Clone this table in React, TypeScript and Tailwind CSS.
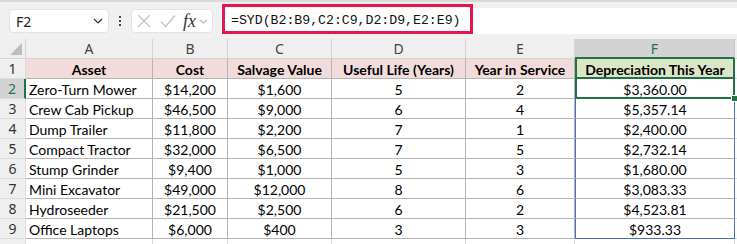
import React from "react";

const data: [string, string, string, string, string, string][] = [
  ["Zero-Turn Mower", "$14,200", "$1,600", "5", "2", "$3,360.00"],
  ["Crew Cab Pickup", "$46,500", "$9,000", "6", "4", "$5,357.14"],
  ["Dump Trailer", "$11,800", "$2,200", "7", "1", "$2,400.00"],
  ["Compact Tractor", "$32,000", "$6,500", "7", "5", "$2,732.14"],
  ["Stump Grinder", "$9,400", "$1,000", "5", "3", "$1,680.00"],
  ["Mini Excavator", "$49,000", "$12,000", "8", "6", "$3,083.33"],
  ["Hydroseeder", "$21,500", "$2,500", "6", "2", "$4,523.81"],
  ["Office Laptops", "$6,000", "$400", "3", "3", "$933.33"],
];

const headers = ["Asset", "Cost", "Salvage Value", "Useful Life (Years)", "Year in Service"];

const cellFont = { fontFamily: "Lato, 'Open Sans', sans-serif" };
const uiFont = { fontFamily: "'Noto Sans', 'Liberation Sans', sans-serif" };

function Chevron({ className }: { className?: string }) {
  return (
    <svg viewBox="0 0 10 6" className={className} fill="none" stroke="currentColor" strokeWidth="1.2">
      <path d="M1 1 L5 5 L9 1" />
    </svg>
  );
}

export default function App() {
  return (
    <div className="w-[737px] h-[244px] overflow-hidden bg-white relative">
      {/* Formula bar */}
      <div className="h-[39px] bg-[#f0f0f0] border-t-2 border-[#d9d9d9] flex items-start pt-[7px]">
        <div
          className="ml-[9px] w-[100px] h-[24px] bg-white rounded-[4px] border border-[#e3e3e3] flex items-center justify-between pl-[6px] pr-[5px] text-[14px] text-[#222]"
          style={uiFont}
        >
          <span>F2</span>
          <Chevron className="w-[10px] h-[6px] text-[#333]" />
        </div>
        <div className="w-[22px] h-[24px] flex flex-col items-center justify-center gap-[2px]">
          <span className="w-[2px] h-[2px] bg-[#444] block"></span>
          <span className="w-[2px] h-[2px] bg-[#444] block"></span>
          <span className="w-[2px] h-[2px] bg-[#444] block"></span>
        </div>
        <div className="w-[82px] h-[24px] bg-white rounded-[4px] border border-[#e3e3e3] flex items-center pl-[5px]">
          <svg viewBox="0 0 14 14" className="w-[14px] h-[14px]" fill="none" stroke="#c2c2c2" strokeWidth="1.2">
            <path d="M1 1 L13 13 M13 1 L1 13" />
          </svg>
          <svg viewBox="0 0 16 14" className="w-[16px] h-[14px] ml-[9px]" fill="none" stroke="#c2c2c2" strokeWidth="1.2">
            <path d="M1 7.5 L5.5 12.5 L15 1.5" />
          </svg>
          <span
            className="ml-[7px] text-[18px] leading-none italic text-[#333]"
            style={{ fontFamily: "'Liberation Serif', serif" }}
          >
            fx
          </span>
          <Chevron className="ml-[3px] w-[9px] h-[5px] text-[#888]" />
        </div>
        <div className="ml-[8px] flex-1 h-[26px] mt-[-1px] bg-white relative">
          <div className="absolute left-[1px] top-[-4px] w-[251px] h-[30px] border-[3px] border-[#e3174e]"></div>
          <div
            className="absolute left-[10px] top-[3px] text-[13.2px] leading-[20px] text-[#111]"
            style={{ fontFamily: "'Liberation Mono', monospace" }}
          >
            =SYD(B2:B9,C2:C9,D2:D9,E2:E9)
          </div>
        </div>
      </div>

      {/* Grid */}
      <div className="grid grid-cols-[26px_127px_75px_104px_134px_109px_160px_2px] auto-rows-[20px]">
        {/* column header row */}
        <div className="bg-[#efefef] border-r border-b border-[#d4d4d4] relative">
          <div className="absolute right-[3px] bottom-[3px] w-0 h-0 border-l-[12px] border-l-transparent border-b-[12px] border-b-[#bdbdbd]"></div>
        </div>
        {["A", "B", "C", "D", "E"].map((c) => (
          <div
            key={c}
            className="bg-[#efefef] border-r border-b border-[#d4d4d4] flex items-center justify-center text-[14px] text-[#444]"
            style={uiFont}
          >
            {c}
          </div>
        ))}
        <div
          className="bg-[#d3d3d3] border-r border-[#c8c8c8] border-b-2 border-b-[#217346] flex items-center justify-center text-[14px] text-[#217346]"
          style={uiFont}
        >
          F
        </div>
        <div className="bg-[#efefef] border-b border-[#d4d4d4]"></div>

        {/* Row 1 */}
        <div
          className="bg-[#efefef] border-r border-b border-[#dcdcdc] flex items-center justify-center text-[14px] text-[#333]"
          style={uiFont}
        >
          1
        </div>
        {headers.map((h) => (
          <div
            key={h}
            className="bg-[#f2dcdb] border-r border-b border-[#b4b4b4] flex items-center justify-center pt-[2px] text-[14px] font-bold text-black whitespace-nowrap"
            style={cellFont}
          >
            {h}
          </div>
        ))}
        <div
          className="bg-[#dbe6c8] border-x-2 border-b-2 border-[#217346] flex items-center justify-center pt-[2px] text-[14px] font-bold text-black whitespace-nowrap"
          style={cellFont}
        >
          Depreciation This Year
        </div>
        <div className="bg-white border-b border-[#d9d9d9]"></div>

        {/* Data rows */}
        {data.map((r, i) => {
          const rowNum = i + 2;
          const selected = i === 0;
          const last = i === data.length - 1;
          return (
            <React.Fragment key={r[0]}>
              <div
                className={
                  selected
                    ? "bg-[#d3d3d3] border-r-2 border-r-[#217346] border-b border-b-[#dcdcdc] flex items-center justify-center text-[14px] text-[#217346]"
                    : "bg-[#efefef] border-r border-b border-[#dcdcdc] flex items-center justify-center text-[14px] text-[#333]"
                }
                style={uiFont}
              >
                {rowNum}
              </div>
              <div
                className="border-r border-b border-[#b4b4b4] flex items-center pl-[3px] pt-[2px] text-[14px] text-black whitespace-nowrap"
                style={cellFont}
              >
                {r[0]}
              </div>
              {r.slice(1, 5).map((v, j) => (
                <div
                  key={j}
                  className="border-r border-b border-[#b4b4b4] flex items-center justify-center pt-[2px] text-[14px] text-black whitespace-nowrap"
                  style={cellFont}
                >
                  {v}
                </div>
              ))}
              {selected ? (
                <div
                  className="relative border-x-2 border-b-2 border-[#217346] flex items-center justify-center pt-[2px] text-[14px] text-black"
                  style={cellFont}
                >
                  {r[5]}
                  <div className="absolute right-[-5px] bottom-[-5px] w-[7px] h-[7px] bg-[#217346] border border-white"></div>
                </div>
              ) : (
                <div
                  className={
                    last
                      ? "border-x border-b border-[#4472c4] flex items-center justify-center pt-[2px] text-[14px] text-black"
                      : "border-x border-x-[#4472c4] border-b border-b-[#b4b4b4] flex items-center justify-center pt-[2px] text-[14px] text-black"
                  }
                  style={cellFont}
                >
                  {r[5]}
                </div>
              )}
              <div className="bg-white border-b border-[#d9d9d9]"></div>
            </React.Fragment>
          );
        })}

        {/* Row 10 sliver */}
        <div className="bg-[#efefef] border-r border-[#dcdcdc]"></div>
        <div className="border-r border-[#d9d9d9]"></div>
        <div className="border-r border-[#d9d9d9]"></div>
        <div className="border-r border-[#d9d9d9]"></div>
        <div className="border-r border-[#d9d9d9]"></div>
        <div className="border-r border-[#d9d9d9]"></div>
        <div className="border-r border-[#d9d9d9]"></div>
        <div></div>
      </div>
    </div>
  );
}
